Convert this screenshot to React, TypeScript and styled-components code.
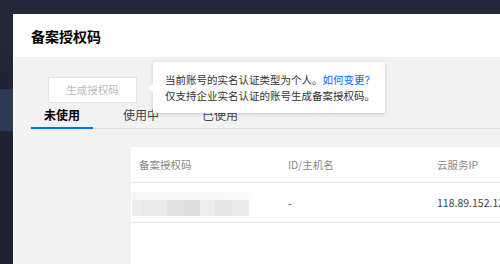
import React from "react";
import styled, { createGlobalStyle } from "styled-components";

const GlobalStyle = createGlobalStyle`
  html, body {
    margin: 0;
    padding: 0;
    background: #1f2533;
  }
  body {
    font-family: "Noto Sans CJK SC", "Noto Sans", sans-serif;
  }
`;

const Page = styled.div`
  width: 500px;
  height: 264px;
  overflow: hidden;
  box-sizing: border-box;
  padding: 14px 0 0 13px;
  display: flex;
  background: linear-gradient(
    to bottom,
    #222a39 0,
    #1f2533 89px,
    #2b3a52 89px,
    #2b3a52 131px,
    #1e2330 131px
  );
`;

const Modal = styled.div`
  flex: 1;
  display: flex;
  flex-direction: column;
  background: #fff;
  border-left: 1px solid #fff;
  min-width: 0;
`;

const Header = styled.div`
  height: 43px;
  flex: none;
  display: flex;
  align-items: center;
  padding-left: 17px;
  background: #fff;
`;

const Title = styled.h1`
  margin: 0;
  font-size: 14px;
  font-weight: 700;
  color: #000;
  line-height: 20px;
`;

const Body = styled.div`
  position: relative;
  flex: 1;
  display: flex;
  flex-direction: column;
  background: #f2f2f2;
  padding: 20px 0 0 17px;
  min-height: 0;
`;

const Toolbar = styled.div`
  display: flex;
  padding-left: 17px;
`;

const Button = styled.button`
  width: 89px;
  height: 26px;
  box-sizing: border-box;
  border: 1px solid #e3e3e3;
  background: #fff;
  color: #bbb;
  font-family: inherit;
  font-size: 10.5px;
  line-height: 16px;
  padding: 0;
  cursor: not-allowed;
`;

const Tooltip = styled.div`
  position: absolute;
  left: 139px;
  top: 5px;
  width: 232px;
  box-sizing: border-box;
  padding: 10px 12px 9px;
  background: #fff;
  box-shadow: 0 1px 4px rgba(0, 0, 0, 0.16);
  font-size: 10.5px;
  line-height: 16px;
  color: #333;
  white-space: nowrap;
  z-index: 2;

  &::before {
    content: "";
    position: absolute;
    left: -5px;
    top: 21px;
    border-style: solid;
    border-width: 5px 5px 5px 0;
    border-color: transparent #fff transparent transparent;
  }
`;

const Link = styled.a`
  color: #006eff;
  text-decoration: none;
`;

const TabList = styled.div`
  display: flex;
  gap: 17px;
  margin-top: 2px;
  height: 24px;
  box-sizing: border-box;
  border-bottom: 1px solid #dcdcdc;
`;

const Tab = styled.div<{ $active?: boolean }>`
  height: 24px;
  box-sizing: border-box;
  padding: 0 13px;
  font-size: 12px;
  line-height: 20px;
  color: ${(p) => (p.$active ? "#000" : "#444")};
  font-weight: ${(p) => (p.$active ? 700 : 400)};
  border-bottom: 2px solid ${(p) => (p.$active ? "#006eff" : "transparent")};
`;

const Table = styled.div`
  flex: 1;
  margin: 18px 0 0 100px;
  width: 520px;
  background: #fff;
`;

const Row = styled.div<{ $head?: boolean }>`
  display: grid;
  grid-template-columns: 149px 149px 1fr;
  height: ${(p) => (p.$head ? "36px" : "40px")};
  box-sizing: border-box;
  border-bottom: 1px solid #e8e8e8;
  font-size: 10.5px;
  line-height: 16px;
  color: ${(p) => (p.$head ? "#888" : "#444")};
`;

const Cell = styled.div`
  display: flex;
  align-items: center;
  padding-left: 8px;
  white-space: nowrap;
`;

const MaskedCell = styled(Cell)`
  padding-left: 1px;
  align-items: flex-start;
  padding-top: 9px;
`;

const Masked = styled.div`
  width: 117px;
  height: 24px;
  filter: blur(0.6px);
  background:
    linear-gradient(
      to right,
      #efeded 0 10px,
      #ebebeb 10px 35px,
      #e2e2e2 35px 52px,
      #dedede 52px 68px,
      #ededed 68px 83px,
      #e5e5e5 83px 100px,
      #ebebeb 100px 117px
    ) bottom / 100% 16px no-repeat,
    linear-gradient(to right, #f6f6f6, #fafafa) top / 100% 8px no-repeat;
`;

export default function App() {
  return (
    <>
      <GlobalStyle />
      <Page>
        <Modal>
          <Header>
            <Title>备案授权码</Title>
          </Header>
          <Body>
            <Toolbar>
              <Button disabled>生成授权码</Button>
            </Toolbar>
            <Tooltip>
              当前账号的实名认证类型为个人。<Link href="#">如何变更？</Link>
              <br />
              仅支持企业实名认证的账号生成备案授权码。
            </Tooltip>
            <TabList>
              <Tab $active>未使用</Tab>
              <Tab>使用中</Tab>
              <Tab>已使用</Tab>
            </TabList>
            <Table>
              <Row $head>
                <Cell>备案授权码</Cell>
                <Cell>ID/主机名</Cell>
                <Cell>云服务IP</Cell>
              </Row>
              <Row>
                <MaskedCell>
                  <Masked />
                </MaskedCell>
                <Cell>-</Cell>
                <Cell>118.89.152.125</Cell>
              </Row>
            </Table>
          </Body>
        </Modal>
      </Page>
    </>
  );
}
